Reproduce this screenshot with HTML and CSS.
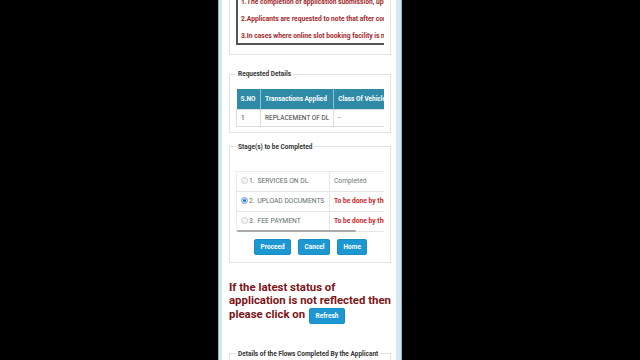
FILE: index.html
```html
<!DOCTYPE html>
<html lang="en">
<head>
<meta charset="utf-8">
<title>Application Status</title>
<link rel="stylesheet" href="styles.css">
</head>
<body>
<div class="screen">
  <div class="page">
    <div class="panel notes-panel">
      <div class="notes-scroll">
        <div class="notes">
          <p>1.The completion of application submission, upload documents and fee payment is mandatory</p>
          <p>2.Applicants are requested to note that after completion of the process slot booking is required</p>
          <p>3.In cases where online slot booking facility is not available please visit the office</p>
        </div>
      </div>
    </div>

    <fieldset class="panel req-panel">
      <legend>Requested Details</legend>
      <div class="scroll">
        <table class="req">
          <thead>
            <tr><th class="c1">S.NO</th><th class="c2">Transactions Applied</th><th class="c3">Class Of Vehicle</th></tr>
          </thead>
          <tbody>
            <tr><td>1</td><td>REPLACEMENT OF DL</td><td>-</td></tr>
          </tbody>
        </table>
      </div>
    </fieldset>

    <fieldset class="panel stages-panel">
      <legend>Stage(s) to be Completed</legend>
      <div class="scroll">
        <table class="stages">
          <tbody>
            <tr><td class="s1"><span class="radio"></span><span class="num">1.</span>SERVICES ON DL</td><td class="done">Completed</td></tr>
            <tr><td class="s1"><span class="radio checked"></span><span class="num">2.</span>UPLOAD DOCUMENTS</td><td class="todo">To be done by the Applicant</td></tr>
            <tr><td class="s1"><span class="radio"></span><span class="num">3.</span>FEE PAYMENT</td><td class="todo">To be done by the Applicant</td></tr>
          </tbody>
        </table>
      </div>
      <div class="scrollbar"></div>
      <div class="buttons">
        <button class="btn">Proceed</button>
        <button class="btn">Cancel</button>
        <button class="btn">Home</button>
      </div>
    </fieldset>

    <p class="notice">If the latest status of<br>application is not reflected then<br>please click on <button class="btn refresh">Refresh</button></p>

    <fieldset class="panel last-panel">
      <legend>Details of the Flows Completed By the Applicant</legend>
      <div class="filler"></div>
    </fieldset>
  </div>
</div>
</body>
</html>
```

FILE: styles.css
```css
* { box-sizing: border-box; }

html, body {
  margin: 0;
  padding: 0;
  background: #000;
  height: 360px;
  overflow: hidden;
}

body {
  font-family: Roboto, "Noto Sans", sans-serif;
}

.screen {
  margin-left: 218px;
  width: 184px;
  height: 360px;
  background: #d2e9f1;
  border-left: 1px solid #8fb0bc;
  border-right: 1px solid #8fb0bc;
  padding: 0 5px 0 3px;
  overflow: hidden;
}

.page {
  display: flow-root;
  background: #fff;
  height: 100%;
  padding: 0 5px 0 7px;
}

.panel {
  border: 1px solid #e2e2e2;
  margin: 0;
  padding: 0 6px;
  min-width: 0;
}

.panel legend {
  font-size: 6.5px;
  line-height: 8px;
  font-weight: 700;
  color: #333;
  padding: 0 2px;
}

/* Notes */
.notes-panel {
  margin-top: -20px;
  padding-top: 6px;
  padding-bottom: 9px;
}

.notes-scroll {
  border-left: 2px solid #555;
  border-bottom: 2px solid #555;
  border-top: 2px solid #555;
  overflow: hidden;
}

.notes {
  padding: 9px 0 3px 3px;
  white-space: nowrap;
}

.notes p {
  margin: 0 0 9px;
  font-size: 6.7px;
  line-height: 8px;
  font-weight: 700;
  color: #a1292c;
}

.notes p:last-child { margin-bottom: 0; }

/* Requested details */
.req-panel {
  margin-top: 15px;
  padding-top: 11px;
  padding-bottom: 5px;
}

.scroll {
  overflow: hidden;
  width: 148px;
}

table {
  border-collapse: collapse;
}

.req {
  width: 190px;
  font-size: 6.5px;
}

.req th {
  background: #2e8aa6;
  color: #fff;
  font-weight: 700;
  height: 20px;
  text-align: left;
  padding: 0 4px;
  border-right: 1px solid #8cc2d3;
  white-space: nowrap;
}

.req .c1 { width: 24px; }
.req .c2 { width: 73px; }

.req td {
  height: 17px;
  padding: 0 4px;
  color: #3a3a3a;
  border: 1px solid #dcdcdc;
  white-space: nowrap;
}

/* Stages */
.stages-panel {
  margin-top: 10px;
  padding-top: 20px;
  padding-bottom: 7px;
}

.stages {
  width: 200px;
  font-size: 6.7px;
}

.stages td {
  height: 20px;
  border-top: 1px solid #e6e6e6;
  border-bottom: 1px solid #e6e6e6;
  white-space: nowrap;
  padding: 0 4px;
}

.stages tr:first-child td { border-top: 1px solid #ececec; }

.stages .s1 {
  width: 93px;
  color: #5d6e6c;
  border-left: 1px solid #ececec;
  border-right: 1px solid #e6e6e6;
  padding-left: 4px;
}

.radio {
  display: inline-block;
  width: 7px;
  height: 7px;
  border-radius: 50%;
  border: 1px solid #cfcfcf;
  background: #f4f4f4;
  vertical-align: -1px;
  margin-right: 1px;
}

.radio.checked {
  background: #1a6fd6;
  border: 1px solid #8db8ec;
  box-shadow: inset 0 0 0 1px #e9f1fb;
}

.num { margin-right: 3px; }

.done { color: #6a7a78; }

.todo {
  color: #cc1f2a;
  font-weight: 700;
}

.scrollbar {
  width: 119px;
  height: 2px;
  margin: -2px 0 0 1px;
  background: #aaaaaa;
  border-radius: 1px;
  position: relative;
}

.buttons {
  display: flex;
  justify-content: center;
  gap: 7px;
  margin-top: 7px;
}

.btn {
  font-family: Roboto, "Noto Sans", sans-serif;
  background: #1c97d1;
  color: #fff;
  border: 1px solid #1a8ec4;
  border-radius: 2px;
  font-size: 6.5px;
  font-weight: 700;
  height: 16px;
  padding: 0 6px;
  line-height: 14px;
  cursor: pointer;
}

.buttons .btn:nth-child(1) { width: 37px; }
.buttons .btn:nth-child(2) { width: 32px; }
.buttons .btn:nth-child(3) { width: 30px; }

/* Notice */
.notice {
  margin: 18px 0 0;
  font-size: 11.4px;
  line-height: 13.5px;
  font-weight: 700;
  color: #7d1517;
  white-space: nowrap;
}

.refresh {
  width: 36px;
  padding: 0;
  margin-left: 1px;
}

.last-panel {
  margin-top: 26px;
}

.filler { height: 20px; }
```
